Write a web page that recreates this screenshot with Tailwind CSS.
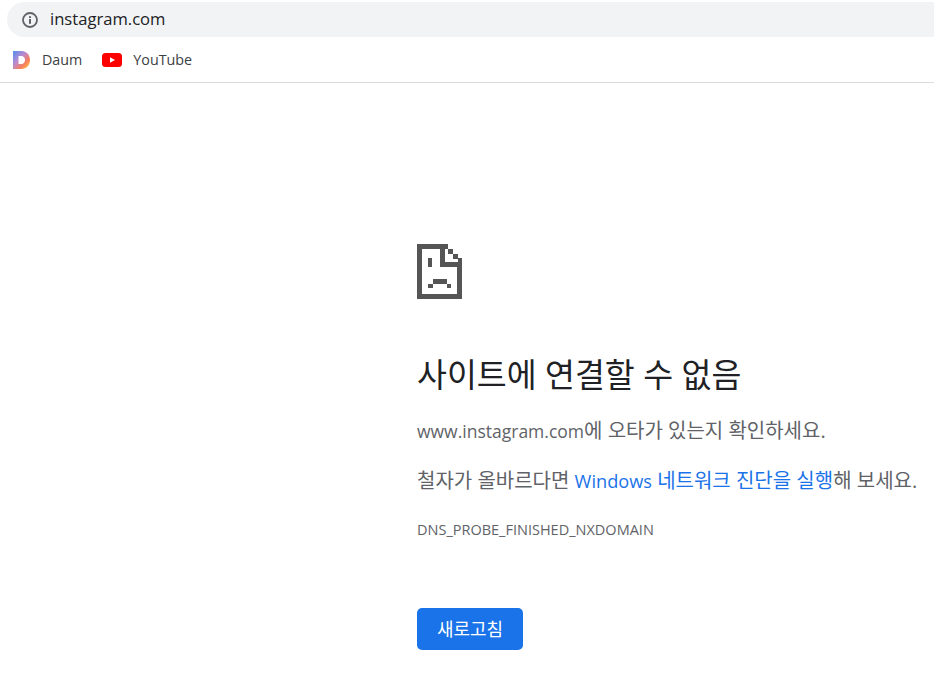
<!DOCTYPE html>
<html lang="ko">
	<head>
		<meta charset="UTF-8" />
		<meta name="viewport" content="width=device-width, initial-scale=1.0" />
		<title>instagram.com</title>
		<script src="https://cdn.jsdelivr.net/npm/@tailwindcss/browser@4"></script>
	</head>
	<body class="bg-white h-[678px] w-[934px] overflow-hidden font-['Open_Sans','Noto_Sans_CJK_KR',sans-serif]">
		<!-- address bar -->
		<header class="h-[37px] pt-[2px] pl-[7px]">
			<div class="h-[35px] bg-[#f1f3f4] rounded-l-full flex items-center pl-[15px]">
				<svg class="w-[16px] h-[16px]" viewBox="0 0 16 16" fill="none">
					<circle cx="8" cy="8" r="7" stroke="#5f6368" stroke-width="1.8" />
					<rect x="7" y="7" width="2" height="4.8" fill="#5f6368" />
					<rect x="7" y="4.2" width="2" height="1.8" fill="#5f6368" />
				</svg>
				<span class="ml-[12px] text-[16.6px] text-[#202124]">instagram.com</span>
			</div>
		</header>

		<!-- bookmarks -->
		<nav class="h-[46px] border-b border-[#dadce0] flex items-center pl-[13px] text-[14.3px] text-[#3c4043]">
			<svg class="w-[17px] h-[18px]" viewBox="0 0 17 18">
				<defs>
					<linearGradient id="daum" x1="0" y1="0" x2="1" y2="1">
						<stop offset="0" stop-color="#4f8ff0" />
						<stop offset="0.4" stop-color="#b98ad0" />
						<stop offset="0.7" stop-color="#f97f5c" />
						<stop offset="1" stop-color="#fdd835" />
					</linearGradient>
				</defs>
				<path fill="url(#daum)" fill-rule="evenodd" d="M0 0H8.5C13.5 0 17 3.8 17 9S13.5 18 8.5 18H0ZM5.5 5V13H8.5C10.6 13 12 11.3 12 9S10.6 5 8.5 5Z" />
			</svg>
			<span class="ml-[12px]">Daum</span>
			<svg class="ml-[20px] w-[20px] h-[14px]" viewBox="0 0 20 14">
				<rect width="20" height="14" rx="3.5" fill="#ff0000" />
				<path d="M8 4.2L13 7L8 9.8Z" fill="#fff" />
			</svg>
			<span class="ml-[11px]">YouTube</span>
		</nav>

		<!-- error page -->
		<main class="pl-[417px] pt-[161px]">
			<svg class="w-[45px] h-[55px] block" viewBox="0 0 45 55" shape-rendering="crispEdges" fill="#555555">
				<path fill-rule="evenodd" d="M0 0H31V5H36V10H41V14H45V55H0ZM5 5V50H40V23H23V5Z" />
				<path d="M28 5H31V10H36V14H41V18H28Z" fill="#fff" />
				<rect x="31" y="5" width="5" height="5" />
				<rect x="36" y="10" width="5" height="5" />
				<rect x="11" y="14" width="4" height="9" />
				<rect x="16" y="35" width="14" height="5" />
				<rect x="11" y="40" width="5" height="4" />
				<rect x="30" y="40" width="4" height="4" />
			</svg>
			<h1 class="mt-[54px] text-[32.5px] leading-[44px] font-normal text-[#202124] whitespace-nowrap">사이트에 연결할 수 없음</h1>
			<p class="mt-[20px] text-[20px] leading-[27px] text-[#5f6368] whitespace-nowrap"><span class="text-[17.5px]">www.instagram.com</span>에 오타가 있는지 확인하세요.</p>
			<p class="mt-[22px] text-[20px] leading-[27px] text-[#5f6368] whitespace-nowrap">철자가 올바르다면 <a class="text-[#1a73e8]"><span class="text-[18.2px]">Windows</span> 네트워크 진단을 실행</a>해 보세요.</p>
			<p class="mt-[25px] text-[14.5px] leading-[20px] text-[#5f6368] whitespace-nowrap">DNS_PROBE_FINISHED_NXDOMAIN</p>
			<button class="mt-[68px] w-[106px] h-[42px] rounded-[5px] bg-[#1a73e8] text-white text-[18px]">새로고침</button>
		</main>
	</body>
</html>
